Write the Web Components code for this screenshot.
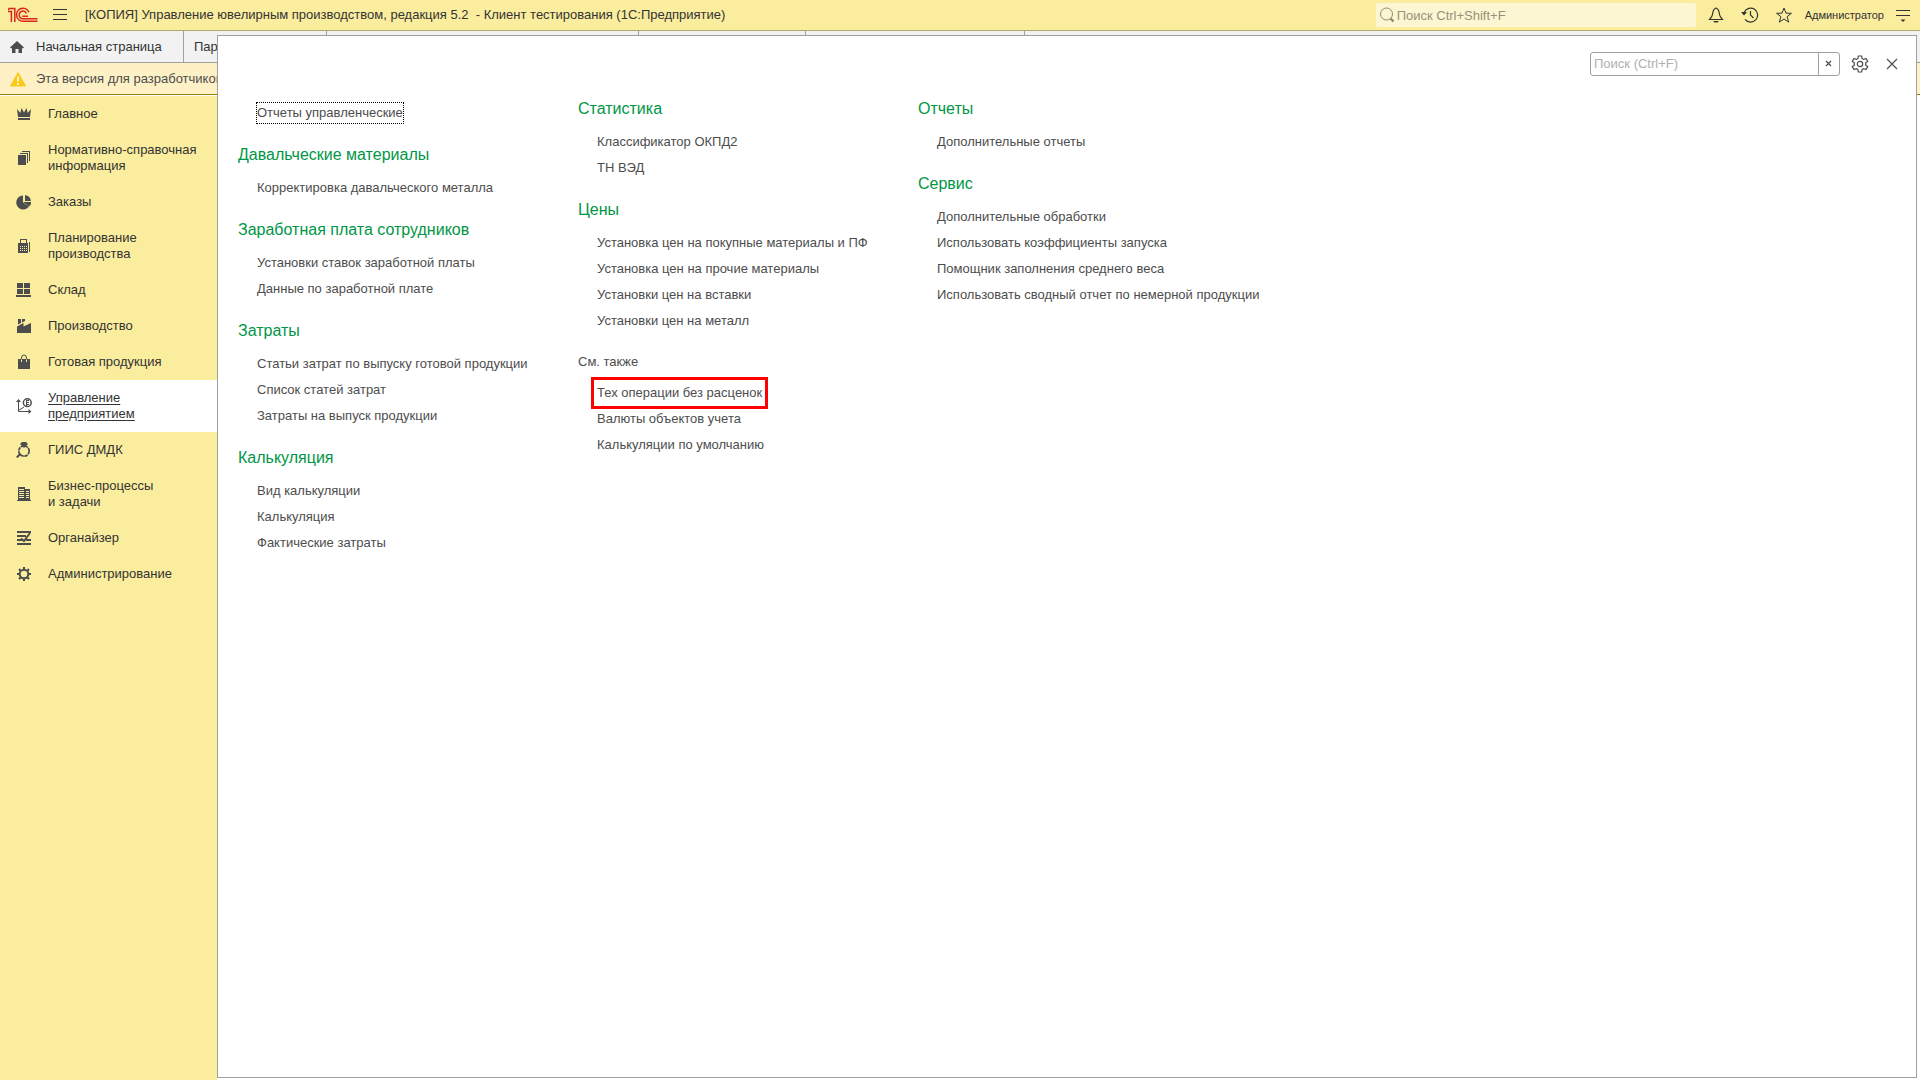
<!DOCTYPE html>
<html lang="ru">
<head>
<meta charset="utf-8">
<title>Управление ювелирным производством</title>
<style>
html, body { height: 100%; margin: 0; }
body { font: 13px/16px "Liberation Sans", Arial, sans-serif; color: #333; background: #fff; overflow: hidden; }
</style>
</head>
<body>
<app-window></app-window>
<script>
const ICONS = {
  logo: [30, 16, '<g fill="none" stroke="#d9261c" stroke-width="1.5"><path d="M0 4.6H3.4V15M.6 1.6H6.8V15M0 3l1-1.4"/><path d="M21 5.2A6.5 6.5 0 1 0 15 14.3H29.500M18.500 6.500A3.800 3.800 0 1 0 15 11.700H29.500M14.300 9.200H20"/></g>'],
  menu: [16, 14, '<path d="M1 1.500h14M1 6.500h14M1 11.500h14" stroke="#333" fill="none"/>'],
  search: [16, 16, '<g fill="none" stroke="#8f8b72"><circle cx="7.500" cy="7" r="6"/><path d="M11.500 11.500l3 3" stroke-width="2.400"/></g>'],
  bell: [16, 16, '<path d="M8 1C5.500 2 4.800 4 4.600 7 4.400 9.500 3 10.500 1.500 12.500H14.500C13 10.500 11.600 9.500 11.400 7 11.200 4 10.500 2 8 1Z" fill="none" stroke="#333" stroke-width="1.200"/><path d="M5 14h6l-1.500 1.500h-3z" fill="#333"/>'],
  history: [18, 16, '<g fill="none" stroke="#333" stroke-width="1.200"><path d="M3.300 5A7 7 0 1 1 4 12.300"/><path d="M9.500 4v4l3 3"/></g><path d="M0 5h6L3 8.500z" fill="#333"/>'],
  star: [16, 16, '<path d="M8 1l2 5.200 5.400.1-4.300 3.400 1.600 5.400L8 12l-4.700 3.100 1.600-5.400L.6 6.300 6 6.200z" fill="none" stroke="#333"/>'],
  more: [14, 14, '<path d="M0 2.500h14M0 7.500h14" stroke="#333"/><path d="M4.500 11.500h5L7 14z" fill="#333"/>'],
  home: [14, 12, '<path d="M7 0l7 6.500-.8.800H12V12H8.500V8h-3v4H2V7.300H.8L0 6.500z"/>'],
  warn: [16, 16, '<path d="M8 1.500L15.500 15H.5z" fill="#fbc91b" stroke="#fbc91b" stroke-linejoin="round"/><path d="M7 5.500h2v5H7zM7 12h2v2H7z" fill="#fff1c6"/>'],
  gear: [18, 18, '<g fill="none" stroke="#4d4d4d" stroke-width="1.200"><path d="M7.300 1h3.400l.4 2.500 1.600.9 2.300-1 1.700 3-2 1.500v2.200l2 1.500-1.700 3-2.300-1-1.600.9-.4 2.500H7.300l-.4-2.500-1.600-.9-2.300 1-1.700-3 2-1.500V7.900l-2-1.500 1.700-3 2.300 1 1.600-.9z"/><circle cx="9" cy="9" r="2.700"/></g>'],
  close: [12, 12, '<path d="M1 1l10 10M11 1L1 11" stroke="#4d4d4d" stroke-width="1.200"/>'],
  clear: [8, 8, '<path d="M1 1l5 5M6 1L1 6" stroke="#4d4d4d" stroke-width="1.200"/>'],
  crown: [16, 16, '<path d="M1 3l3.300 4L5.500 2 8 6.500 10.500 2l1.200 5L15 3 14 11H2zM2 12h12v2H2z"/>'],
  docs: [16, 16, '<path d="M2 5h8v10H2zM4 3h8v10h-1V4H4zM6 1h8v10h-1V2H6z"/>'],
  pie: [16, 16, '<path d="M7 1.500V8.500L13 12.500A7 7 0 1 1 7 1.500zM9 1.100A7 7 0 0 1 14.900 7H9z"/><path d="M7 8h8v1.500a7 7 0 0 1-2 3z"/>'],
  calc: [16, 16, '<path d="M4 1h7v4h1v10H2V5h2zM5 2v3h5V2z" fill-rule="evenodd"/><path d="M13 4h1v10h-1z"/><path d="M4 8h1v1H4zM6 8h1v1H6zM8 8h1v1H8zM10 8h1v1h-1zM4 10h1v1H4zM6 10h1v1H6zM8 10h1v1H8zM10 10h1v1h-1zM4 12h1v1H4zM6 12h1v1H6zM8 12h1v1H8zM10 12h1v1h-1z" fill="#fbed9e"/>'],
  boxes: [16, 16, '<path d="M1 1h6v5H1zM8 1h6v5H8zM1 7h6v5H1zM8 7h6v5H8zM0 13h15v2H0z"/>'],
  factory: [16, 16, '<path d="M2 1h3v4L2 6.500zM6 1h3v2L6 4.500zM1 8.500L7.500 5v3.500L15 5v10H1z"/>'],
  bag: [16, 16, '<path d="M2 5h12v10H2z"/><path d="M5.500 7.500V4a2.500 3 0 0 1 5 0v3.500" fill="none" stroke="#4d4d4d"/><path d="M5.500 5.500v2.500M10.500 5.500v2.500" stroke="#fbed9e"/>'],
  chart: [16, 16, '<path d="M2.500 2v11.500H15M2.500 12.500L8 9" fill="none" stroke="#4d4d4d"/><path d="M0 4l2.500-3L5 4zM12.500 11l3 2.500-3 2.500z"/><circle cx="11.300" cy="4.700" r="3.900" fill="none" stroke="#4d4d4d" stroke-width="1.500"/><path d="M10 2h3v1h-2v1h2v1h-2v1h2v1h-2v1h-1z"/>'],
  ring: [16, 16, '<circle cx="8" cy="9" r="5.200" fill="none" stroke="#4d4d4d" stroke-width="1.700" stroke-dasharray="3.500 .600"/><path d="M6 0h4l2 2-4 4-4-4zM0 15l3.500-4 2 1.500L1.500 16z"/>'],
  office: [16, 16, '<path d="M2 1h7v13H2zM9 3h5v11H9zM1 14h14v1H1z"/><path d="M3 3.500h5M3 5.500h5M3 7.500h5M3 9.500h5M3 11.500h5M10 5.500h3M10 7.500h3M10 9.500h3M10 11.500h3" stroke="#fbed9e"/>'],
  list: [16, 16, '<path d="M1 1h14v2H1zM1 5h9v2H1zM1 9h5v2H1zM10 9h5v2h-5zM1 13h14v2H1z"/><path d="M14 3L8 11 5 8.500" fill="none" stroke="#4d4d4d" stroke-width="2"/>'],
  cog: [16, 16, '<circle cx="8" cy="8" r="4.300" fill="none" stroke="#4d4d4d" stroke-width="2"/><path d="M8 1v2.500M8 12.500V15M1 8h2.500M12.500 8H15M3 3l2 2M11 11l2 2M13 3l-2 2M5 11l-2 2" stroke="#4d4d4d" stroke-width="2"/>']
};

// The content is filled in before it is attached, so nested elements see their attributes when they connect.
const define = (name, html, setup) => {
  const template = document.createElement('template');
  template.innerHTML = html;
  customElements.define(name, class extends HTMLElement {
    connectedCallback() {
      if (this.shadowRoot) return;
      const content = template.content.cloneNode(true);
      if (setup) setup(this, content);
      this.attachShadow({ mode: 'open' }).append(content);
    }
  });
};

const BUTTON = 'button { font: inherit; color: inherit; background: none; border: 0; padding: 0; margin: 0; display: flex; align-items: center; justify-content: center; cursor: pointer; }';

define('ui-icon', '<style>:host { display: block; flex: none; } svg { display: block; fill: #4d4d4d; }</style><span></span>', (host, root) => {
  const [w, h, body] = ICONS[host.getAttribute('name')];
  root.querySelector('span').innerHTML = `<svg width="${w}" height="${h}" viewBox="0 0 ${w} ${h}" aria-hidden="true">${body}</svg>`;
});

define('icon-button', `<style>:host { display: block; flex: none; } ${BUTTON} button { width: 100%; height: 100%; }</style><button type="button"><ui-icon></ui-icon></button>`, (host, root) => {
  root.querySelector('button').setAttribute('aria-label', host.getAttribute('label'));
  root.querySelector('ui-icon').setAttribute('name', host.getAttribute('icon'));
});

define('title-bar', `<style>
:host { display: flex; align-items: center; height: 30px; background: #fbed9e; border-bottom: 1px solid #b3a96b; padding: 0 8px; }
${BUTTON}
h1 { font-size: 13px; font-weight: 400; margin: 0 auto 0 16px; white-space: pre; }
.menu { width: 18px; height: 24px; margin-left: 13px; }
label { display: flex; align-items: center; gap: 2px; width: 317px; height: 24px; padding-left: 3px; margin-right: 8px; background: #fdf6d2; border-radius: 2px; }
input { flex: 1; min-width: 0; height: 24px; padding: 0; border: 0; background: none; outline: 0; font: inherit; }
input::placeholder { color: #97917a; opacity: 1; }
.tools { display: flex; gap: 10px; margin-right: 9px; }
.tool { width: 24px; height: 24px; }
.user { font-size: 11px; margin-right: 10px; }
.more { width: 18px; height: 24px; }
</style>
<ui-icon name="logo"></ui-icon>
<icon-button class="menu" icon="menu" label="Меню"></icon-button>
<h1>[КОПИЯ] Управление ювелирным производством, редакция 5.2  - Клиент тестирования (1С:Предприятие)</h1>
<label><ui-icon name="search"></ui-icon><input type="search" placeholder="Поиск Ctrl+Shift+F" aria-label="Поиск"></label>
<div class="tools">
<icon-button class="tool" icon="bell" label="Уведомления"></icon-button>
<icon-button class="tool" icon="history" label="История"></icon-button>
<icon-button class="tool" icon="star" label="Избранное"></icon-button>
</div>
<button class="user" type="button">Администратор</button>
<icon-button class="more" icon="more" label="Сервис"></icon-button>`);

define('tab-strip', `<style>
:host { display: flex; height: 31px; background: #f2f2f2; border-bottom: 1px solid #a0a0a0; }
${BUTTON}
button { border-right: 1px solid #a0a0a0; justify-content: flex-start; box-sizing: border-box; padding: 0 10px; gap: 12px; }
.home { width: 184px; } .a { width: 143px; } .b { width: 312px; } .c { width: 167px; } .d { width: 219px; }
</style>
<button class="home" type="button"><ui-icon name="home"></ui-icon>Начальная страница</button>
<button class="a" type="button">Пар</button>
<button class="b" type="button" aria-label="Вкладка 3"></button>
<button class="c" type="button" aria-label="Вкладка 4"></button>
<button class="d" type="button" aria-label="Вкладка 5"></button>`);

define('info-bar', `<style>
:host { display: flex; align-items: center; gap: 10px; height: 31px; padding-left: 10px; background: #fff1c6; border-bottom: 1px solid #997a00; margin-bottom: 1px; color: #4d4d4d; }
</style><ui-icon name="warn"></ui-icon><slot></slot>`);

define('section-item', `<style>
:host { display: block; }
a { display: flex; align-items: center; gap: 16px; padding: 10px 16px; color: #333; text-decoration: none; }
:host([selected]) a { background: #fff; }
:host([selected]) span { text-decoration: underline; text-underline-offset: 2px; }
</style><a href="#"><ui-icon></ui-icon><span><slot></slot></span></a>`, (host, root) => {
  root.querySelector('ui-icon').setAttribute('name', host.getAttribute('icon'));
});

define('section-nav', `<style>:host { display: block; flex: 1; width: 217px; background: #fbed9e; }</style>
<nav>
<section-item icon="crown">Главное</section-item>
<section-item icon="docs">Нормативно-справочная<br>информация</section-item>
<section-item icon="pie">Заказы</section-item>
<section-item icon="calc">Планирование<br>производства</section-item>
<section-item icon="boxes">Склад</section-item>
<section-item icon="factory">Производство</section-item>
<section-item icon="bag">Готовая продукция</section-item>
<section-item icon="chart" selected>Управление<br>предприятием</section-item>
<section-item icon="ring">ГИИС ДМДК</section-item>
<section-item icon="office">Бизнес-процессы<br>и задачи</section-item>
<section-item icon="list">Органайзер</section-item>
<section-item icon="cog">Администрирование</section-item>
</nav>`);

define('command-link', `<style>
:host { display: flex; height: 26px; align-items: center; padding-left: 18px; }
a { position: relative; border: 1px solid transparent; padding: 2px 0; color: #4d4d4d; text-decoration: none; white-space: nowrap; }
:host([focused]) a { border: 1px dotted #000; }
:host([marked]) a::after { content: ""; position: absolute; inset: -6px; border: 3px solid #f00; }
</style><a href="#"><slot></slot></a>`);

define('command-group', `<style>
:host { display: block; }
h2 { margin: 0 0 10px; font-size: 16px; line-height: 20px; font-weight: 400; color: #009646; }
:host([also]) h2 { font-size: 13px; line-height: 18px; margin-bottom: 9px; color: #4d4d4d; }
:host(:not([heading])) { padding-top: 1px; }
:host(:not([heading])) h2 { display: none; }
</style><h2></h2><slot></slot>`, (host, root) => {
  root.querySelector('h2').textContent = host.getAttribute('heading') || '';
});

define('command-panel', `<style>
:host { display: block; background: #fff; border: 1px solid #a0a0a0; }
header { display: flex; align-items: center; justify-content: flex-end; height: 24px; padding: 16px 12px 0 0; }
.find { display: flex; box-sizing: border-box; width: 250px; height: 24px; border: 1px solid #a0a0a0; border-radius: 3px; margin-right: 8px; }
input { flex: 1; min-width: 0; padding: 0 3px; border: 0; border-right: 1px solid #a0a0a0; background: none; outline: 0; font: inherit; }
input::placeholder { color: #b0b0b0; opacity: 1; }
.clear { width: 20px; }
.tool { width: 24px; height: 24px; }
.gap { margin-right: 8px; }
main { display: flex; align-items: flex-start; gap: 44px; padding: 23px 20px; }
section { display: flex; flex-direction: column; gap: 19px; min-width: 296px; }
</style>
<header>
<div class="find"><input type="text" placeholder="Поиск (Ctrl+F)" aria-label="Поиск"><icon-button class="clear" icon="clear" label="Очистить"></icon-button></div>
<icon-button class="tool gap" icon="gear" label="Настройка"></icon-button>
<icon-button class="tool" icon="close" label="Закрыть"></icon-button>
</header>
<main>
<section>
<command-group><command-link focused>Отчеты управленческие</command-link></command-group>
<command-group heading="Давальческие материалы"><command-link>Корректировка давальческого металла</command-link></command-group>
<command-group heading="Заработная плата сотрудников"><command-link>Установки ставок заработной платы</command-link><command-link>Данные по заработной плате</command-link></command-group>
<command-group heading="Затраты"><command-link>Статьи затрат по выпуску готовой продукции</command-link><command-link>Список статей затрат</command-link><command-link>Затраты на выпуск продукции</command-link></command-group>
<command-group heading="Калькуляция"><command-link>Вид калькуляции</command-link><command-link>Калькуляция</command-link><command-link>Фактические затраты</command-link></command-group>
</section>
<section>
<command-group heading="Статистика"><command-link>Классификатор ОКПД2</command-link><command-link>ТН ВЭД</command-link></command-group>
<command-group heading="Цены"><command-link>Установка цен на покупные материалы и ПФ</command-link><command-link>Установка цен на прочие материалы</command-link><command-link>Установки цен на вставки</command-link><command-link>Установки цен на металл</command-link></command-group>
<command-group heading="См. также" also><command-link marked>Тех операции без расценок</command-link><command-link>Валюты объектов учета</command-link><command-link>Калькуляции по умолчанию</command-link></command-group>
</section>
<section>
<command-group heading="Отчеты"><command-link>Дополнительные отчеты</command-link></command-group>
<command-group heading="Сервис"><command-link>Дополнительные обработки</command-link><command-link>Использовать коэффициенты запуска</command-link><command-link>Помощник заполнения среднего веса</command-link><command-link>Использовать сводный отчет по немерной продукции</command-link></command-group>
</section>
</main>`);

define('app-window', `<style>
:host { display: flex; flex-direction: column; height: 100vh; }
.work { flex: 1; position: relative; display: flex; flex-direction: column; min-height: 0; }
command-panel { position: absolute; inset: 4px 3px 2px 217px; }
</style>
<title-bar></title-bar>
<div class="work">
<tab-strip></tab-strip>
<info-bar>Эта версия для разработчиков</info-bar>
<section-nav></section-nav>
<command-panel></command-panel>
</div>`);
</script>
</body>
</html>
